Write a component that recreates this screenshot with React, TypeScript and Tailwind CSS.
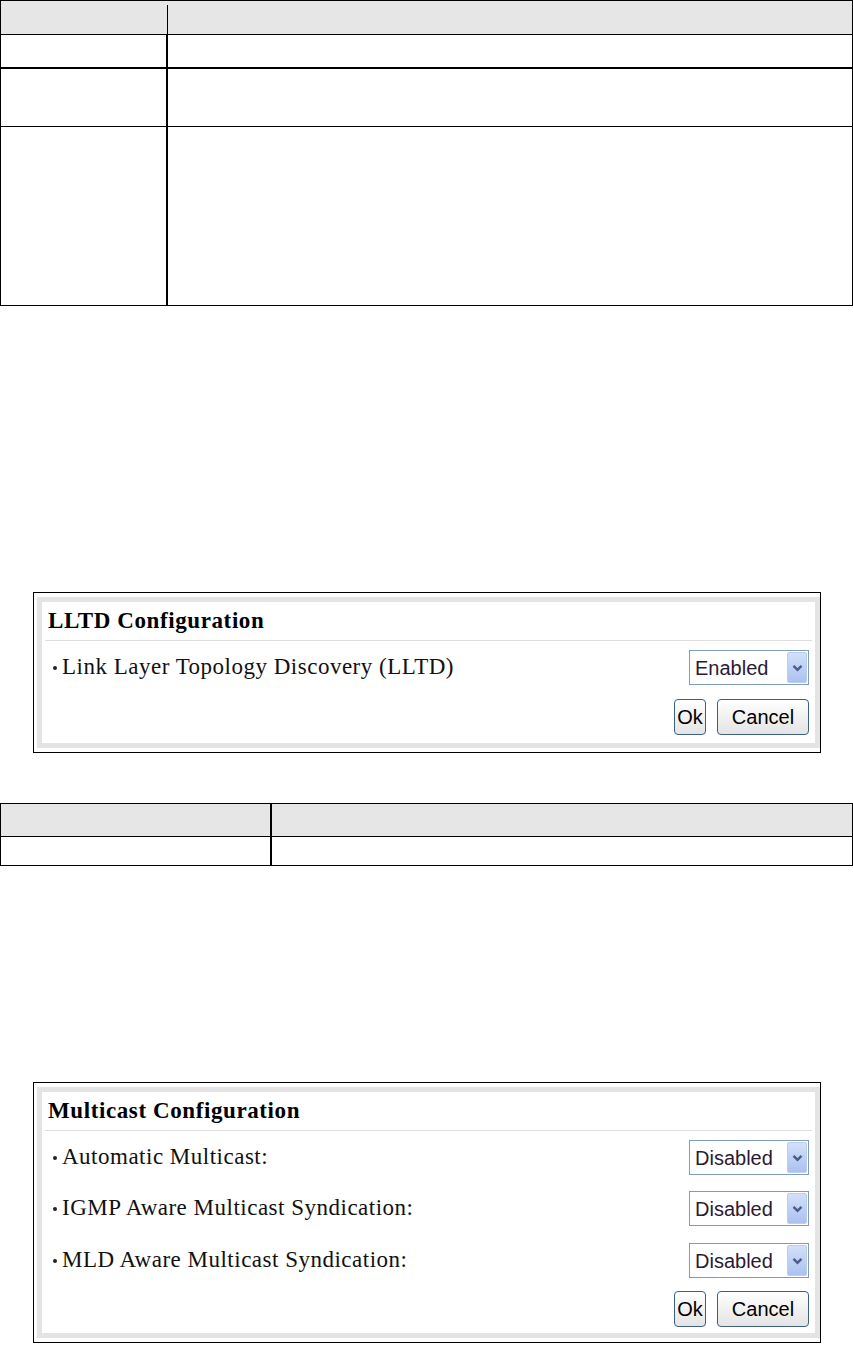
const serif = { fontFamily: '"Liberation Serif", "Times New Roman", serif' };
const sans = { fontFamily: '"Liberation Sans", Arial, sans-serif' };

function Chevron() {
  return (
    <svg width="11" height="8" viewBox="0 0 11 8" fill="none">
      <path d="M1.5 1.8 L5.5 5.8 L9.5 1.8" stroke="#4a5d86" strokeWidth="2.4" />
    </svg>
  );
}

function Select({ value }: { value: string }) {
  return (
    <div className="flex h-[35px] w-[120px] items-center border border-[#7f9db9] bg-white">
      <span className="pl-[5px] text-[20px] leading-none text-[#2b1a33]" style={sans}>
        {value}
      </span>
      <div className="ml-auto mr-[1px] flex h-[31px] w-[20px] items-center justify-center rounded-[2px] border border-[#bccdf0] bg-gradient-to-b from-[#d3e0fa] to-[#abc1ef]">
        <Chevron />
      </div>
    </div>
  );
}

function Buttons() {
  return (
    <div className="flex justify-end gap-[11px] pr-[6px]" style={sans}>
      <button className="h-[36px] w-[32px] rounded-[4px] border border-[#3d5f80] bg-gradient-to-b from-white to-[#e4e4e4] text-[20px] text-black">
        Ok
      </button>
      <button className="h-[36px] w-[92px] rounded-[4px] border border-[#3d5f80] bg-gradient-to-b from-white to-[#e4e4e4] text-[20px] text-black">
        Cancel
      </button>
    </div>
  );
}

function Row({ label, value, className }: { label: string; value: string; className: string }) {
  return (
    <div className={`flex items-center justify-between pl-[11px] pr-[6px] ${className}`}>
      <div className="flex items-center text-[23px] tracking-[0.5px] text-[#111]" style={serif}>
        <span className="mr-[5px] inline-block h-[4px] w-[4px] rounded-full bg-[#222]" />
        <span>{label}</span>
      </div>
      <Select value={value} />
    </div>
  );
}

function Panel({ title, children }: { title: string; children: React.ReactNode }) {
  return (
    <div className="ml-[33px] w-[788px] border border-black pb-[4px] pl-[3px] pt-[4px]">
      <div className="border-[5px] border-[#e4e4e4] bg-white">
        <div
          className="flex h-[38px] items-center pl-[6px] text-[23px] font-bold tracking-[0.6px] text-black"
          style={serif}
        >
          {title}
        </div>
        <div className="mx-[3px] border-t border-[#dedede]" />
        {children}
      </div>
    </div>
  );
}

export default function App() {
  return (
    <div className="min-h-screen w-[853px] bg-white">
      <div className="w-[853px] border border-black">
        <div className="flex h-[34px] border-b border-black bg-[#e6e6e6]">
          <div className="w-[166px]" />
          <div className="h-[29px] flex-1 self-end border-l border-black" />
        </div>
        <div className="flex h-[34px] border-b-2 border-black">
          <div className="w-[167px] border-r-2 border-black" />
          <div className="flex-1" />
        </div>
        <div className="flex h-[58px] border-b border-black">
          <div className="w-[167px] border-r-2 border-black" />
          <div className="flex-1" />
        </div>
        <div className="flex h-[178px]">
          <div className="w-[167px] border-r-2 border-black" />
          <div className="flex-1" />
        </div>
      </div>

      <div className="mt-[286px]">
        <Panel title="LLTD Configuration">
          <Row label="Link Layer Topology Discovery (LLTD)" value="Enabled" className="mt-[9px]" />
          <div className="mt-[14px] pb-[8px]">
            <Buttons />
          </div>
        </Panel>
      </div>

      <div className="mt-[50px] w-[853px] border border-black">
        <div className="flex h-[33px] border-b border-black bg-[#e6e6e6]">
          <div className="w-[271px] border-r-2 border-black" />
          <div className="flex-1" />
        </div>
        <div className="flex h-[28px]">
          <div className="w-[271px] border-r-2 border-black" />
          <div className="flex-1" />
        </div>
      </div>

      <div className="mt-[216px]">
        <Panel title="Multicast Configuration">
          <Row label="Automatic Multicast:" value="Disabled" className="mt-[9px]" />
          <Row label="IGMP Aware Multicast Syndication:" value="Disabled" className="mt-[16px]" />
          <Row label="MLD Aware Multicast Syndication:" value="Disabled" className="mt-[17px]" />
          <div className="mt-[13px] pb-[6px]">
            <Buttons />
          </div>
        </Panel>
      </div>
    </div>
  );
}
